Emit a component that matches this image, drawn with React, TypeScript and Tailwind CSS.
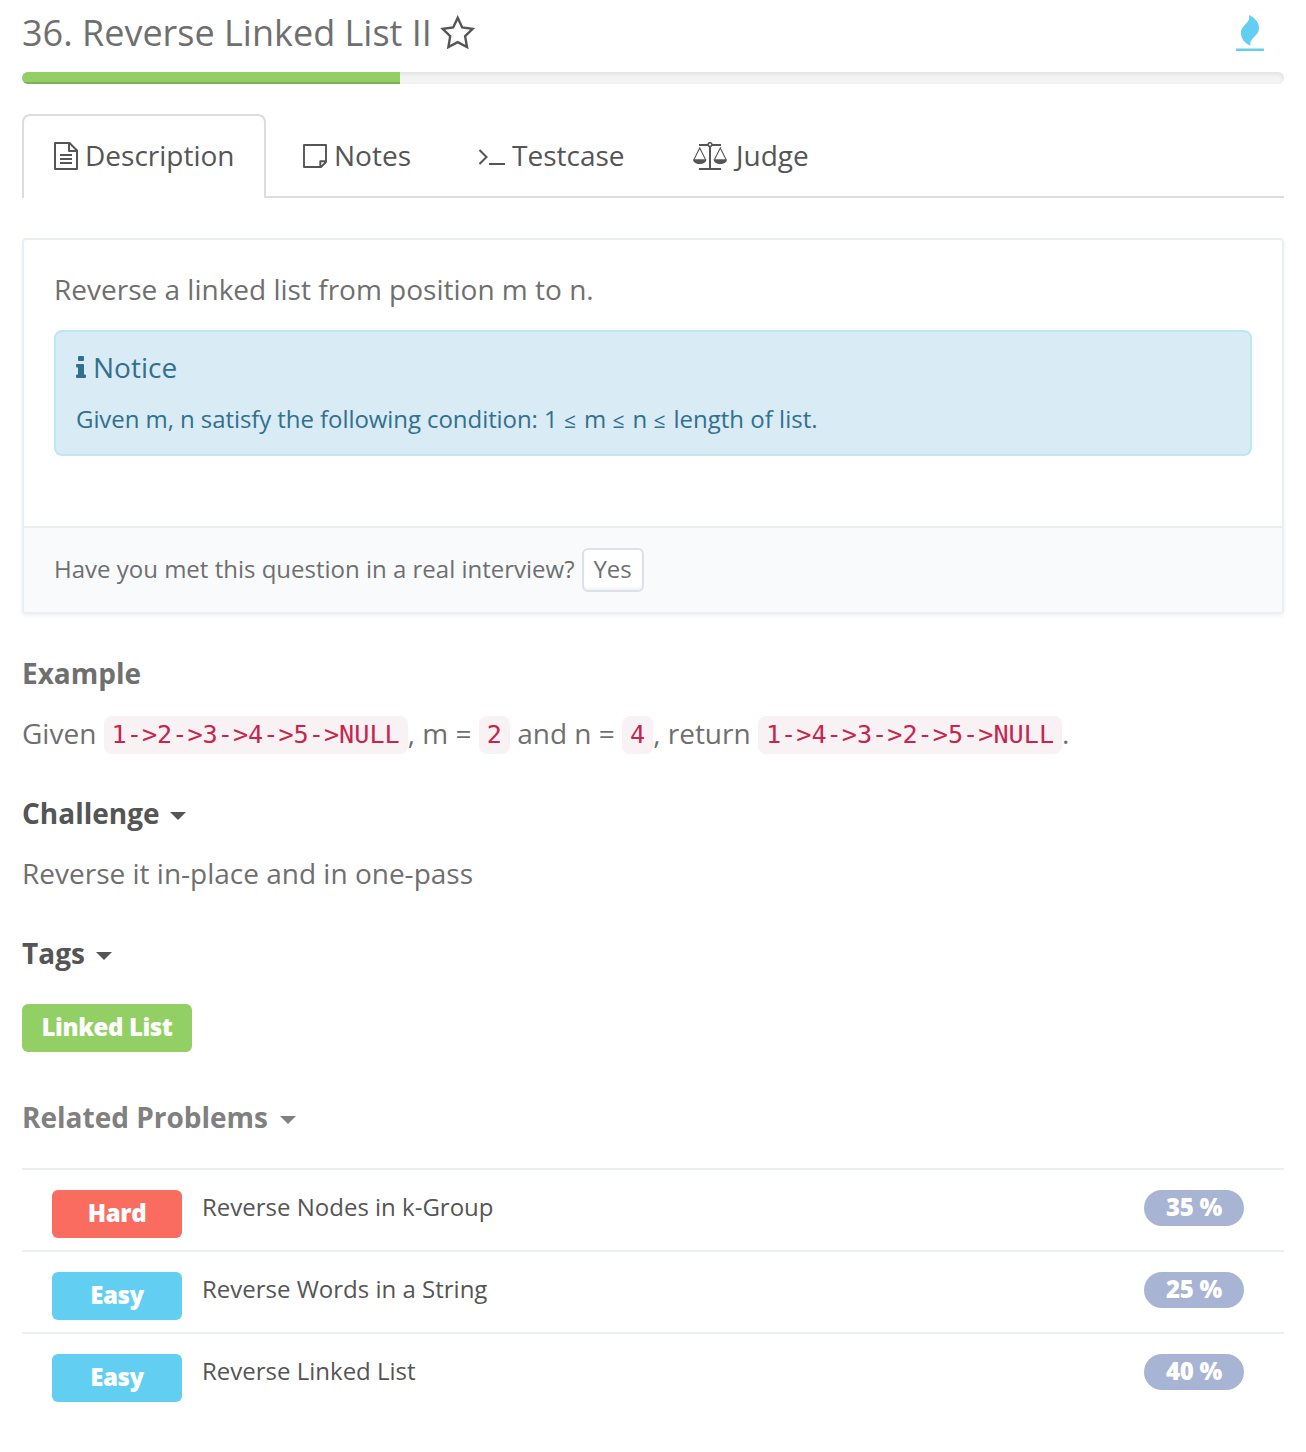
import React from "react";

function Star() {
  return (
    <svg className="-mt-px ml-2 h-9 w-9 shrink-0" viewBox="0 0 36 36" fill="none" stroke="#555" strokeWidth="2.4">
      <path d="M17.7 2.8 L22.2 12.5 L32.6 13.8 L25.1 21.2 L27 32 L17.7 27.1 L8.4 32 L10.2 21.2 L2.7 13.8 L13.2 12.5 Z" />
    </svg>
  );
}

function Flame() {
  return (
    <svg className="h-9 w-7" viewBox="1236 15 28 36" fill="#62cff2">
      <path d="M1248.8 15 C1254.5 17.5 1259 22 1259 28 C1259 36.5 1248.5 38 1250.7 45.7 C1245 43.5 1241 39 1241 33 C1241 24.5 1251.5 23 1248.8 15 Z" />
      <rect x="1236" y="48.6" width="28" height="2.4" rx="0.5" />
    </svg>
  );
}

function DocIcon() {
  return (
    <svg className="h-7 w-6" viewBox="0 0 24 28" fill="none" stroke="#555" strokeWidth="2" strokeLinejoin="round">
      <path d="M1 1H15.5L23 8.5V27H1Z M15 1V9H23" />
      <path d="M6 13H18M6 17H18M6 21H18" />
    </svg>
  );
}

function NoteIcon() {
  return (
    <svg className="h-6 w-6" viewBox="0 0 24 24" fill="none" stroke="#555" strokeWidth="1.9" strokeLinejoin="round">
      <path d="M1 1H23V18L18 23H1Z M17.3 23V17.3H23" />
    </svg>
  );
}

function PromptIcon() {
  return (
    <svg className="h-7 w-[26px]" viewBox="479 142 26 28" fill="none" stroke="#555" strokeWidth="2">
      <path d="M479.5 150L486.5 157L479.5 164M489 164H505" />
    </svg>
  );
}

function ScaleIcon() {
  return (
    <svg className="h-7 w-[34px]" viewBox="693 142 34 28" fill="none" stroke="#555" strokeWidth="2">
      <path d="M699 145H708M712 145H721M710 147V169M699 169H721" />
      <circle cx="710" cy="144.6" r="1.9" strokeWidth="1.5" />
      <path d="M694 159.5L699.7 148L705.5 159.5M714.5 159.5L720.3 148L726 159.5" strokeWidth="1.1" />
      <path d="M693 159.3H706.4C706.4 162.4 703.5 164 699.7 164S693 162.4 693 159.3ZM713.6 159.3H727C727 162.4 724 164 720.3 164S713.6 162.4 713.6 159.3Z" fill="#555" stroke="none" />
    </svg>
  );
}

function InfoIcon() {
  return (
    <svg className="h-[22px] w-[10px]" viewBox="0 0 10 22" fill="#31708f">
      <rect x="2" y="0" width="6" height="5" rx="1" />
      <path d="M1 8H7Q8 8 8 9V18.5H9Q10 18.5 10 19.5V21Q10 22 9 22H1Q0 22 0 21V19.5Q0 18.5 1 18.5H2V11.5H1Q0 11.5 0 10.5V9Q0 8 1 8Z" />
    </svg>
  );
}

function Caret() {
  return <span className="mt-[5px] border-x-8 border-t-8 border-x-transparent border-t-current" />;
}

function Code({ text }: { text: string }) {
  return (
    <code className="mt-0.5 h-[38px] rounded-lg bg-[#f9f2f4] px-2 font-['DejaVu_Sans_Mono',monospace] text-[25.2px] leading-[38px] text-[#c7254e]">
      {text}
    </code>
  );
}

function Le() {
  return <span className="pr-[1.8px] text-[21px]">≤</span>;
}

const problems = [
  { level: "Hard", name: "Reverse Nodes in k-Group", rate: "35 %" },
  { level: "Easy", name: "Reverse Words in a String", rate: "25 %" },
  { level: "Easy", name: "Reverse Linked List", rate: "40 %" },
];

export default function App() {
  return (
    <div className="h-[1452px] w-[1306px] overflow-hidden bg-white px-[22px] font-['Open_Sans',sans-serif] text-[28px] leading-[38px] text-[#6f6f6f]">
      <header className="flex h-[72px] items-start justify-between">
        <div className="flex items-center pt-[7px]">
          <h1 className="whitespace-nowrap text-[36px] leading-[52px]">36. Reverse Linked List II</h1>
          <Star />
        </div>
        <div className="mr-5 pt-[15px]">
          <Flame />
        </div>
      </header>

      <div className="h-3 overflow-hidden rounded-lg bg-[#f3f3f3] shadow-[inset_0_2px_4px_rgba(0,0,0,0.08)]">
        <div className="h-full w-[378px] bg-[#92cf64] shadow-[inset_0_-2px_0_rgba(0,0,0,0.15)]" />
      </div>

      <nav className="mt-[30px] flex h-[84px] text-[#555]">
        <div className="flex w-[244px] items-center gap-[7px] rounded-t-lg border-2 border-b-0 border-[#ddd] pb-0.5 pl-[30px]">
          <DocIcon />
          <span className="-mt-0.5">Description</span>
        </div>
        <div className="flex flex-1 items-center border-b-2 border-[#ddd] pl-[37px]">
          <div className="flex w-[176px] items-center gap-[7px] pt-[2px]">
            <NoteIcon />
            <span className="-mt-0.5">Notes</span>
          </div>
          <div className="flex w-[214px] items-center gap-[7px] pt-[2px]">
            <PromptIcon />
            <span className="-mt-0.5">Testcase</span>
          </div>
          <div className="flex items-center gap-[9px] pt-[2px]">
            <ScaleIcon />
            <span className="-mt-0.5">Judge</span>
          </div>
        </div>
      </nav>

      <section className="mt-10 h-[376px] rounded border-2 border-[#e9eff5] shadow-[0_2px_4px_rgba(0,0,0,0.06)]">
        <div className="h-[286px] px-[30px] pt-[30px]">
          <p className="h-10">Reverse a linked list from position m to n.</p>
          <div className="mt-5 h-[126px] rounded-lg border-2 border-[#bce8f1] bg-[#d9ebf5] px-5 pt-4 text-[#31708f]">
            <div className="flex items-center gap-[7px]">
              <InfoIcon />
              <span>Notice</span>
            </div>
            <p className="mt-4 h-[34px] text-[24px] leading-[34px]">
              <span className="tracking-[-0.07px]">Given m, n satisfy the following condition: </span>1 <Le /> m <Le /> n <Le /> length of list.
            </p>
          </div>
        </div>
        <div className="flex h-[86px] items-center border-t-2 border-[#e9eff5] bg-[#f9fafc] pl-[30px] text-[24px]">
          <span className="-mt-0.5">Have you met this question in a real interview?</span>
          <button className="ml-[7px] h-11 w-[62px] rounded-md border-2 border-[#dbe1e8] bg-white pb-0.5 leading-[38px] shadow-[inset_0_-2px_2px_rgba(0,0,0,0.05)]">
            Yes
          </button>
        </div>
      </section>

      <h2 className="mt-10 h-10 font-bold">Example</h2>
      <p className="mt-5 flex h-10 items-start whitespace-pre">
        <span>Given </span>
        <Code text="1->2->3->4->5->NULL" />
        <span>, m = </span>
        <Code text="2" />
        <span> and n = </span>
        <Code text="4" />
        <span>, return </span>
        <Code text="1->4->3->2->5->NULL" />
        <span>.</span>
      </p>

      <h2 className="mt-10 flex h-10 items-center gap-2.5 pb-0.5 font-bold text-[#555]">
        Challenge <Caret />
      </h2>
      <p className="mt-5 h-10">Reverse it in-place and in one-pass</p>

      <h2 className="mt-10 flex h-10 items-center gap-[11px] pb-0.5 font-bold text-[#555]">
        Tags <Caret />
      </h2>
      <span className="mt-[30px] block h-12 w-[170px] rounded-md bg-[#92cf64] text-center text-[24px] font-extrabold leading-[46px] tracking-[-0.4px] text-white">
        Linked List
      </span>

      <h2 className="mt-[46px] flex h-10 items-center gap-3 pb-0.5 font-bold text-[#808080]">
        Related Problems <Caret />
      </h2>
      <ul className="mt-[30px] text-[24px]">
        {problems.map((p) => (
          <li key={p.name} className="flex h-[82px] items-start border-t-2 border-[#e9eff5] pl-[30px] pr-10 pt-5">
            <span
              className={`h-12 w-[130px] rounded-md text-center font-extrabold leading-[46px] tracking-[-0.4px] text-white ${
                p.level === "Hard" ? "bg-[#fa6c60]" : "bg-[#62cff2]"
              }`}
            >
              {p.level}
            </span>
            <span className="ml-5 flex-1 leading-[34px] text-[#555]">{p.name}</span>
            <span className="h-9 w-[100px] rounded-full bg-[#a8b4d3] text-center font-extrabold leading-[34px] tracking-[-0.3px] text-white">
              {p.rate}
            </span>
          </li>
        ))}
      </ul>
    </div>
  );
}
